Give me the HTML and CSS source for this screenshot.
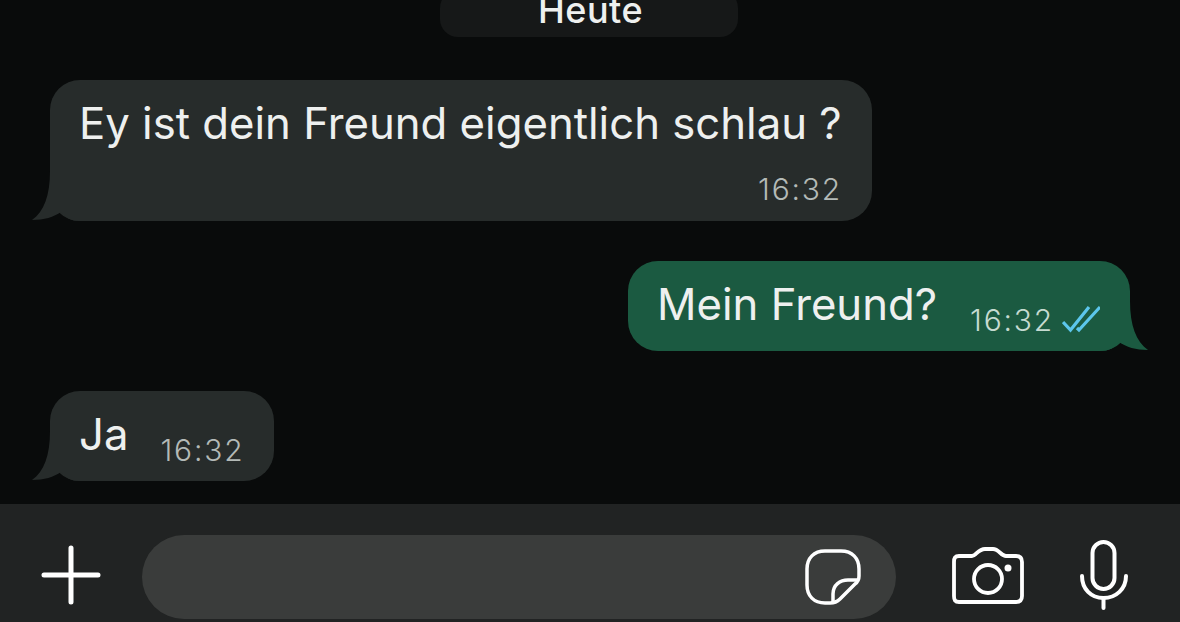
FILE: index.html
```html
<!DOCTYPE html>
<html>
  <head>
    <title>Chat</title>
    <link rel="stylesheet" href="styles.css">
  </head>
  <body>
    <div class="chat">
      <div class="date-pill">Heute</div>

      <div class="bubble bubble-in bubble-long">
        <div class="text">Ey ist dein Freund eigentlich schlau ?</div>
        <div class="meta">16:32</div>
        <svg class="tail" viewBox="0 0 50 50"><path d="M18 0C18 24 12 41 0 49C12 49 22 46 29 41C34 47 39 50 48 50V0Z"/></svg>
      </div>

      <div class="bubble bubble-out bubble-row">
        <div class="text">Mein Freund?</div>
        <div class="meta">
          16:32
          <!-- read ticks -->
          <svg class="ticks" viewBox="0 0 40 28" fill="none" stroke="#5cc6ec" stroke-width="3.200">
            <path d="M1 17L8.500 25L27 2"/>
            <path d="M15 23L17 25L38 2"/>
          </svg>
        </div>
        <svg class="tail" viewBox="0 0 50 50"><path d="M18 0C18 24 12 41 0 49C12 49 22 46 29 41C34 47 39 50 48 50V0Z"/></svg>
      </div>

      <div class="bubble bubble-in bubble-row">
        <div class="text">Ja</div>
        <div class="meta">16:32</div>
        <svg class="tail" viewBox="0 0 50 50"><path d="M18 0C18 24 12 41 0 49C12 49 22 46 29 41C34 47 39 50 48 50V0Z"/></svg>
      </div>
    </div>

    <div class="input-bar">
      <svg class="icon-plus" viewBox="0 0 60 60" fill="none" stroke="#fff" stroke-width="5" stroke-linecap="round">
        <path d="M30 3V57M3 30H57"/>
      </svg>
      <div class="input-field">
        <svg class="icon-sticker" viewBox="0 0 56 56" fill="none" stroke="#fff" stroke-width="3.500" stroke-linejoin="round">
          <path d="M20 2H36C47 2 54 9 54 20V27C54 30 53 33 50 35L35 50C32 53 29 54 25 54H20C9 54 2 47 2 36V20C2 9 9 2 20 2Z"/>
          <path d="M28 53V45C28 36 35 31 43 31H54"/>
        </svg>
      </div>
      <svg class="icon-camera" viewBox="0 0 72 58" fill="none" stroke="#fff" stroke-width="3.800" stroke-linejoin="round">
        <path d="M7 9H20C24 9 26 2 33 2H41C47 2 49 9 54 9H64C68 9 70 11 70 15V49C70 53 68 55 64 55H7C3 55 2 53 2 49V15C2 11 3 9 7 9Z"/>
        <circle cx="36" cy="32" r="14"/>
        <circle cx="56" cy="21" r="3.500" fill="#fff" stroke="none"/>
      </svg>
      <svg class="icon-mic" viewBox="0 0 50 70" fill="none" stroke="#fff" stroke-width="4" stroke-linecap="round">
        <rect x="13.500" y="2" width="22" height="47" rx="11"/>
        <path d="M3 36C3 49 12 58 24.500 58C37 58 47 49 47 36"/>
        <path d="M24.500 58V68"/>
      </svg>
    </div>
  </body>
</html>
```

FILE: styles.css
```css
html, body {
  margin: 0;
  height: 622px;
  overflow: hidden;
}
body {
  background-color: #090b0b;
  font-family: Inter, "Liberation Sans", sans-serif;
  color: #eef0ef;
}
.chat {
  height: 504px;
  display: flex;
  flex-direction: column;
  align-items: flex-start;
  padding: 0 50px;
  box-sizing: border-box;
}
.date-pill {
  align-self: center;
  flex: none;
  box-sizing: border-box;
  width: 298px;
  height: 47px;
  padding-left: 3px;
  margin: -10px 0 43px -2px;
  background-color: #161818;
  border-radius: 18px;
  text-align: center;
  font-size: 36px;
  font-weight: 500;
  letter-spacing: 0.5px;
  line-height: 41px;
}
.bubble {
  position: relative;
  flex: none;
  box-sizing: border-box;
  border-radius: 30px;
  padding: 0 30px;
}
.bubble-in {
  background-color: #272c2b;
  fill: #272c2b;
}
.bubble-out {
  align-self: flex-end;
  background-color: #1b5a41;
  fill: #1b5a41;
  padding-right: 28px;
}
.bubble-long {
  width: 822px;
  height: 141px;
  margin-bottom: 40px;
  padding-top: 17px;
}
.bubble-long .meta {
  text-align: right;
  margin-top: 21px;
}
.bubble-row {
  height: 90px;
  display: flex;
  align-items: flex-start;
  padding-top: 17px;
  margin-bottom: 40px;
}
.text {
  font-size: 43.700px;
  line-height: 54px;
  margin-left: -1px;
  white-space: nowrap;
}
.meta {
  font-size: 30px;
  line-height: 34px;
  font-weight: 300;
  letter-spacing: 1.800px;
  color: #b4bab7;
}
.bubble-row .meta {
  display: flex;
  align-items: center;
  margin: 25px 0 0 32px;
}
.bubble-out .meta {
  color: #c6dbd1;
  margin-left: 33px;
}
.ticks {
  width: 40px;
  height: 28px;
  margin-left: 8px;
  margin-top: -2px;
}
.tail {
  position: absolute;
  width: 50px;
  height: 50px;
  bottom: 0;
  left: -18px;
}
.bubble-out .tail {
  left: auto;
  right: -18px;
  transform: scaleX(-1);
}
.input-bar {
  height: 118px;
  background-color: #212323;
  display: flex;
  align-items: flex-start;
}
.icon-plus {
  width: 60px;
  height: 60px;
  margin: 41px 41px 0 41px;
  flex: none;
}
.input-field {
  width: 754px;
  height: 84px;
  margin-top: 31px;
  background-color: #3a3c3b;
  border-radius: 42px;
  display: flex;
  justify-content: flex-end;
  align-items: center;
  flex: none;
}
.icon-sticker {
  width: 56px;
  height: 56px;
  margin: 0 35px 0 0;
}
.icon-camera {
  width: 72px;
  height: 58px;
  margin: 43px 0 0 56px;
  flex: none;
}
.icon-mic {
  width: 50px;
  height: 70px;
  margin: 36px 0 0 55px;
  flex: none;
}
```
